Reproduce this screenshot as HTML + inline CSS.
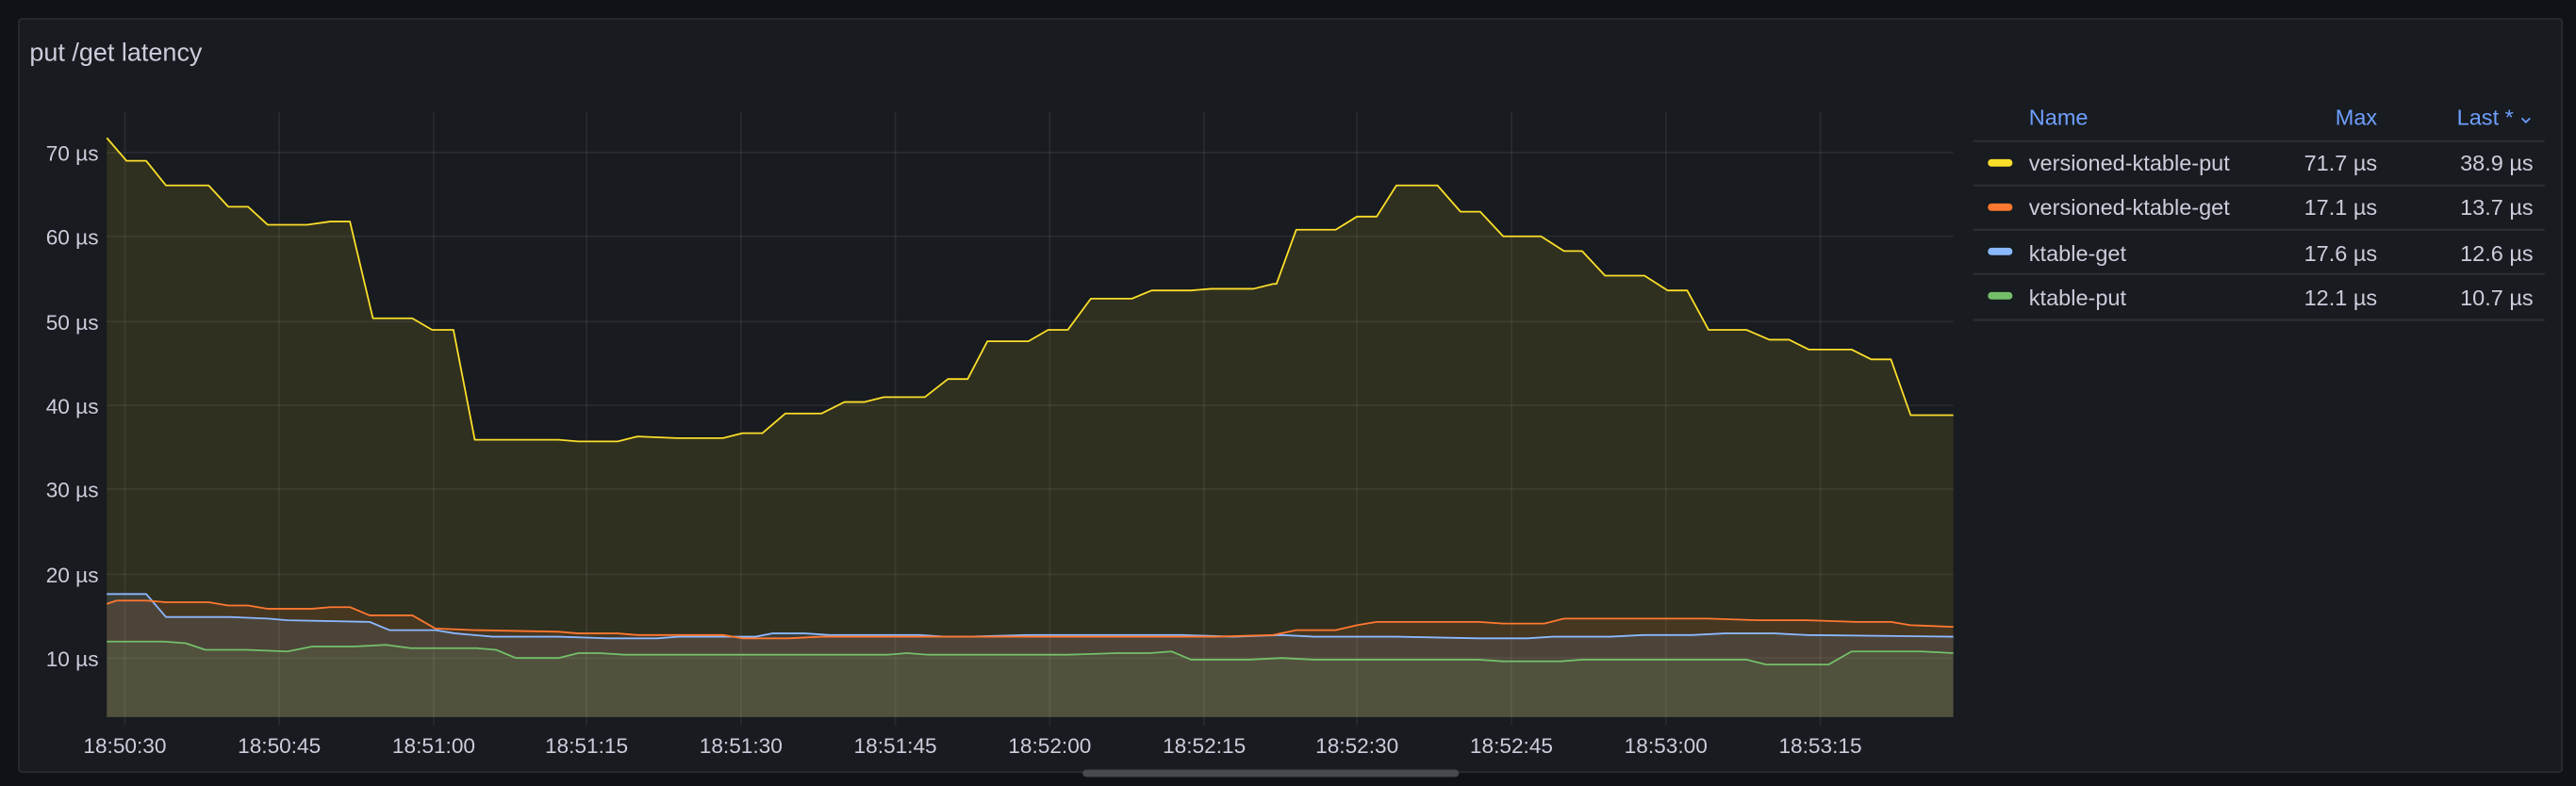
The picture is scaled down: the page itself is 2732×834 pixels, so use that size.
<!DOCTYPE html>
<html><head><meta charset="utf-8"><style>
html,body{margin:0;padding:0;background:#111217;width:2732px;height:834px;overflow:hidden}
svg{display:block}
text{font-family:"Liberation Sans",sans-serif;fill:#ccccdc}
</style></head><body>
<svg width="2732" height="834" viewBox="0 0 1568 479" preserveAspectRatio="none">
<rect x="0" y="0" width="1568" height="479" fill="#111217"/>
<rect x="11.5" y="11.5" width="1548" height="459" rx="2" fill="#181b1f" stroke="#2a2c31" stroke-width="1"/>
<text x="18" y="37" font-size="15.5">put /get latency</text>
<g stroke="rgba(204,204,220,0.09)" stroke-width="1" vector-effect="non-scaling-stroke">
<line x1="65" x2="1189" y1="93" y2="93"/><line x1="65" x2="1189" y1="144" y2="144"/><line x1="65" x2="1189" y1="196" y2="196"/><line x1="65" x2="1189" y1="247" y2="247"/><line x1="65" x2="1189" y1="298" y2="298"/><line x1="65" x2="1189" y1="350" y2="350"/><line x1="65" x2="1189" y1="401" y2="401"/>
<line x1="76" x2="76" y1="68" y2="442"/><line x1="170" x2="170" y1="68" y2="442"/><line x1="264" x2="264" y1="68" y2="442"/><line x1="357" x2="357" y1="68" y2="442"/><line x1="451" x2="451" y1="68" y2="442"/><line x1="545" x2="545" y1="68" y2="442"/><line x1="639" x2="639" y1="68" y2="442"/><line x1="733" x2="733" y1="68" y2="442"/><line x1="826" x2="826" y1="68" y2="442"/><line x1="920" x2="920" y1="68" y2="442"/><line x1="1014" x2="1014" y1="68" y2="442"/><line x1="1108" x2="1108" y1="68" y2="442"/>
</g>
<g fill-opacity="0.11">
<polygon fill="#fade2a" points="65,437 65,84 77,98 89,98 101,113 127,113 139,126 151,126 163,137 187,137 201,135 213,135 227,194 251,194 263,201 276,201 289,268 340,268 352,269 376,269 388,266 412,267 440,267 452,264 464,264 478,252 500,252 514,245 526,245 538,242 563,242 577,231 589,231 601,208 626,208 638,201 650,201 664,182 689,182 701,177 725,177 737,176 763,176 775,173 777,173 789,140 813,140 826,132 838,132 850,113 875,113 889,129 901,129 915,144 938,144 952,153 963,153 977,168 1001,168 1015,177 1027,177 1040,201 1063,201 1077,207 1089,207 1101,213 1127,213 1139,219 1151,219 1163,253 1189,253 1189,437"/>
<polygon fill="#ff7830" points="65,437 65,368 71,366 89,366 101,367 127,367 139,369 151,369 163,371 190,371 201,370 213,370 225,375 251,375 265,383 289,384 340,385 352,386 376,386 388,387 440,387 452,389 480,389 500,388 700,388 740,388 775,387 789,384 813,384 826,381 838,379 900,379 915,380 940,380 952,377 977,377 1010,377 1040,377 1070,378 1100,378 1130,379 1151,379 1163,381 1189,382 1189,437"/>
<polygon fill="#8ab8ff" points="65,437 65,362 89,362 101,376 140,376 163,377 175,378 225,379 237,384 265,384 277,386 300,388 340,388 370,389 400,389 413,388 460,388 470,386 490,386 505,387 560,387 575,388 590,388 625,387 720,387 750,388 780,387 800,388 850,388 900,389 930,389 945,388 980,388 1000,387 1030,387 1050,386 1080,386 1100,387 1189,388 1189,437"/>
<polygon fill="#73bf69" points="65,437 65,391 100,391 113,392 125,396 150,396 175,397 190,394 215,394 235,393 250,395 290,395 302,396 314,401 340,401 352,398 365,398 380,399 540,399 552,398 565,399 650,399 680,398 700,398 713,397 725,402 760,402 780,401 800,402 900,402 915,403 950,403 963,402 1063,402 1075,405 1113,405 1127,397 1170,397 1189,398 1189,437"/>
</g>
<g fill="none" stroke-width="1.8" vector-effect="non-scaling-stroke" stroke-linejoin="round">
<polyline stroke="#73bf69" vector-effect="non-scaling-stroke" points="65,391 100,391 113,392 125,396 150,396 175,397 190,394 215,394 235,393 250,395 290,395 302,396 314,401 340,401 352,398 365,398 380,399 540,399 552,398 565,399 650,399 680,398 700,398 713,397 725,402 760,402 780,401 800,402 900,402 915,403 950,403 963,402 1063,402 1075,405 1113,405 1127,397 1170,397 1189,398"/>
<polyline stroke="#8ab8ff" vector-effect="non-scaling-stroke" points="65,362 89,362 101,376 140,376 163,377 175,378 225,379 237,384 265,384 277,386 300,388 340,388 370,389 400,389 413,388 460,388 470,386 490,386 505,387 560,387 575,388 590,388 625,387 720,387 750,388 780,387 800,388 850,388 900,389 930,389 945,388 980,388 1000,387 1030,387 1050,386 1080,386 1100,387 1189,388"/>
<polyline stroke="#ff7830" vector-effect="non-scaling-stroke" points="65,368 71,366 89,366 101,367 127,367 139,369 151,369 163,371 190,371 201,370 213,370 225,375 251,375 265,383 289,384 340,385 352,386 376,386 388,387 440,387 452,389 480,389 500,388 700,388 740,388 775,387 789,384 813,384 826,381 838,379 900,379 915,380 940,380 952,377 977,377 1010,377 1040,377 1070,378 1100,378 1130,379 1151,379 1163,381 1189,382"/>
<polyline stroke="#fade2a" vector-effect="non-scaling-stroke" points="65,84 77,98 89,98 101,113 127,113 139,126 151,126 163,137 187,137 201,135 213,135 227,194 251,194 263,201 276,201 289,268 340,268 352,269 376,269 388,266 412,267 440,267 452,264 464,264 478,252 500,252 514,245 526,245 538,242 563,242 577,231 589,231 601,208 626,208 638,201 650,201 664,182 689,182 701,177 725,177 737,176 763,176 775,173 777,173 789,140 813,140 826,132 838,132 850,113 875,113 889,129 901,129 915,144 938,144 952,153 963,153 977,168 1001,168 1015,177 1027,177 1040,201 1063,201 1077,207 1089,207 1101,213 1127,213 1139,219 1151,219 1163,253 1189,253"/>
</g>
<g font-size="13" text-anchor="end">
<text x="60" y="98">70 µs</text><text x="60" y="149">60 µs</text><text x="60" y="201">50 µs</text><text x="60" y="252">40 µs</text><text x="60" y="303">30 µs</text><text x="60" y="355">20 µs</text><text x="60" y="406">10 µs</text>
</g>
<g font-size="13" text-anchor="middle">
<text x="76" y="459">18:50:30</text><text x="170" y="459">18:50:45</text><text x="264" y="459">18:51:00</text><text x="357" y="459">18:51:15</text><text x="451" y="459">18:51:30</text><text x="545" y="459">18:51:45</text><text x="639" y="459">18:52:00</text><text x="733" y="459">18:52:15</text><text x="826" y="459">18:52:30</text><text x="920" y="459">18:52:45</text><text x="1014" y="459">18:53:00</text><text x="1108" y="459">18:53:15</text>
</g>
<rect x="659" y="469" width="229" height="4.5" rx="2.2" fill="#47494f"/>
<g font-size="13.5">
<text x="1235" y="76" fill="#6e9fff" style="fill:#6e9fff">Name</text>
<text x="1447" y="76" text-anchor="end" style="fill:#6e9fff">Max</text>
<text x="1530" y="76" text-anchor="end" style="fill:#6e9fff">Last *</text>
<path d="M1535,72 l2.5,2.5 l2.5,-2.5" stroke="#6e9fff" fill="none" stroke-width="1"/>
<g stroke="#2c2f35" stroke-width="1.2"><line x1="1201" x2="1549" y1="86" y2="86"/><line x1="1201" x2="1549" y1="113" y2="113"/><line x1="1201" x2="1549" y1="140" y2="140"/><line x1="1201" x2="1549" y1="167" y2="167"/><line x1="1201" x2="1549" y1="195" y2="195"/></g>
<rect x="1210" y="97" width="15" height="4.5" rx="2.2" fill="#fade2a"/>
<rect x="1210" y="124" width="15" height="4.5" rx="2.2" fill="#ff7830"/>
<rect x="1210" y="151" width="15" height="4.5" rx="2.2" fill="#8ab8ff"/>
<rect x="1210" y="178" width="15" height="4.5" rx="2.2" fill="#73bf69"/>
<text x="1235" y="104">versioned-ktable-put</text><text x="1447" y="104" text-anchor="end">71.7 µs</text><text x="1542" y="104" text-anchor="end">38.9 µs</text>
<text x="1235" y="131">versioned-ktable-get</text><text x="1447" y="131" text-anchor="end">17.1 µs</text><text x="1542" y="131" text-anchor="end">13.7 µs</text>
<text x="1235" y="159">ktable-get</text><text x="1447" y="159" text-anchor="end">17.6 µs</text><text x="1542" y="159" text-anchor="end">12.6 µs</text>
<text x="1235" y="186">ktable-put</text><text x="1447" y="186" text-anchor="end">12.1 µs</text><text x="1542" y="186" text-anchor="end">10.7 µs</text>
</g>
</svg>
</body></html>
